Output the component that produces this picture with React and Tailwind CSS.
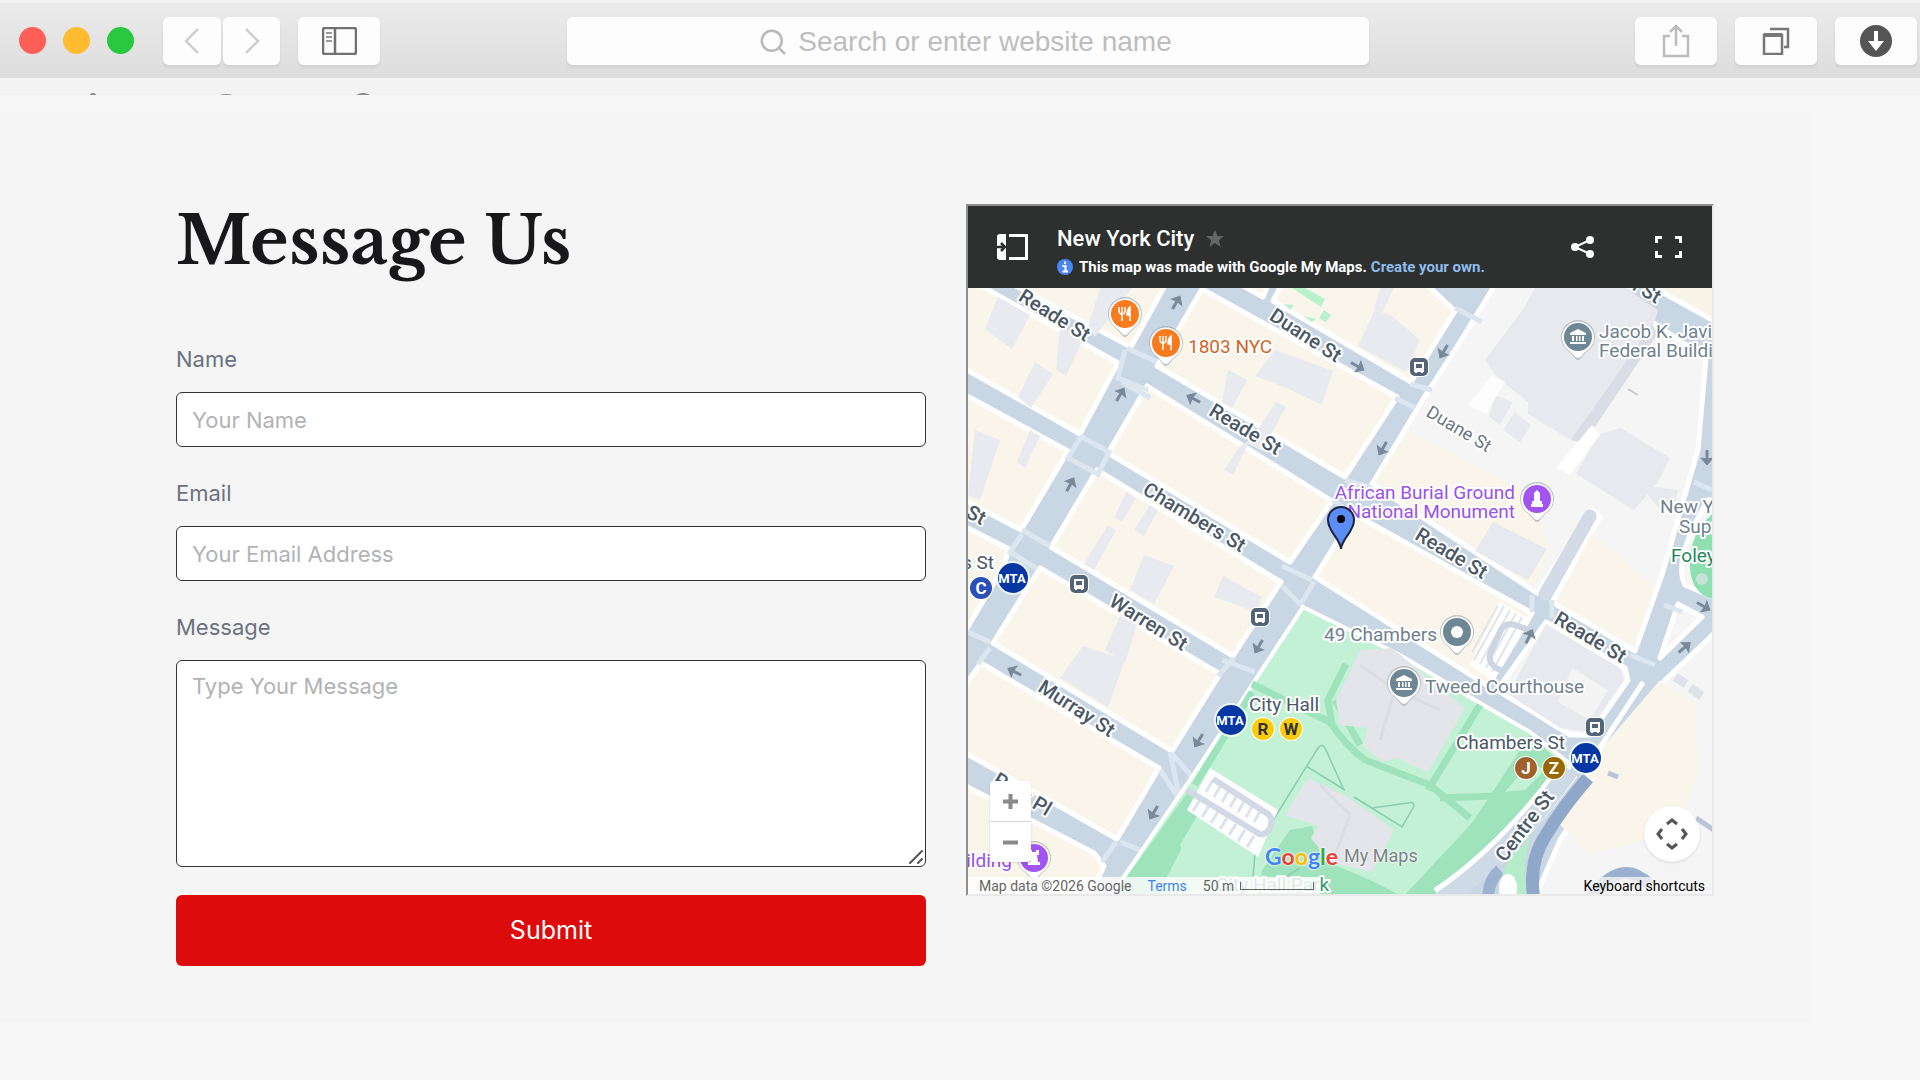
import { useState } from "react";
import { Search } from "lucide-react";

const streetLabels = [
  { text: "Reade St", x: 1051, y: 321, angle: 32 },
  { text: "Duane St", x: 1302, y: 341, angle: 33 },
  { text: "Reade St", x: 1242, y: 435, angle: 31 },
  { text: "Chambers St", x: 1191, y: 523, angle: 31 },
  { text: "Warren St", x: 1145, y: 628, angle: 32 },
  { text: "Murray St", x: 1073, y: 714, angle: 33 },
  { text: "Reade St", x: 1448, y: 559, angle: 31 },
  { text: "Reade St", x: 1587, y: 643, angle: 31 },
  { text: "Centre St", x: 1530, y: 830, angle: -53 },
  { text: "St", x: 973, y: 521, angle: 28 },
  { text: "h St", x: 1641, y: 295, angle: 31 },
  { text: "Park Pl", x: 1019, y: 800, angle: 31 },
];

const creamBlocks = [
  "1008,282 1131,347 1167,282",
  "960,284 978,284 1118,363 1080,434 960,366",
  "1202,289 1397,397 1345,477 1157,366",
  "1273,301 1284,280 1422,280 1455,311 1411,382",
  "1232,280 1263,297 1270,280",
  "1147,386 1332,501 1290,562 1108,453",
  "1097,470 1281,582 1233,656 1051,547",
  "1040,568 1220,674 1172,751 993,643",
  "981,663 1159,768 1117,839 960,750 960,692",
  "960,392 1068,451 1021,530 960,498",
  "960,524 1009,549 1003,568 960,640",
  "960,783 1094,853 1104,866 1088,900 960,900",
  "1354,514 1532,613 1488,686 1315,577",
];

const buildings = [
  "998,297 1030,315 1012,349 985,329",
  "1035,362 1053,374 1031,408 1018,397",
  "1060,325 1083,339 1066,376 1056,370",
  "1100,288 1132,288 1095,337 1088,327",
  "1275,350 1333,371 1322,405 1287,388 1255,376",
  "1228,370 1247,380 1232,408 1222,403",
  "1276,402 1286,407 1262,451 1248,444",
  "1240,446 1250,440 1233,475 1224,470",
  "975,430 1000,440 980,500 968,495",
  "1030,430 1040,436 1025,468 1017,462",
  "1126,492 1136,498 1122,522 1114,518",
  "1150,505 1158,510 1144,536 1134,530",
  "1108,525 1116,530 1094,570 1084,564",
  "1144,555 1174,566 1154,604 1130,590",
  "1223,576 1262,597 1256,612 1214,597",
  "1120,616 1137,625 1125,663 1105,650",
  "1083,646 1125,660 1108,707 1060,678",
  "1375,310 1392,316 1420,340 1406,372 1358,346",
  "1380,288 1394,288 1382,313 1374,309",
];

const greyBuildings = [
  "1524,308 1540,278 1610,278 1658,310 1652,330 1584,428 1571,440 1528,414 1528,402 1498,378 1485,360",
  "1495,395 1513,402 1500,425 1489,417",
  "1515,412 1531,425 1520,442 1503,430",
  "1598,435 1620,428 1670,458 1658,482 1634,510 1576,474",
  "1493,522 1547,549 1528,580 1475,551",
  "1546,624 1620,668 1624,680 1588,732 1560,728 1508,694",
  "1640,485 1678,490 1675,505 1660,510",
];

const arrows = [
  { x: 1176, y: 303, angle: -60 },
  { x: 1120, y: 395, angle: -60 },
  { x: 1194, y: 399, angle: 208 },
  { x: 1357, y: 366, angle: 30 },
  { x: 1444, y: 351, angle: 120 },
  { x: 1383, y: 448, angle: 120 },
  { x: 1070, y: 485, angle: -62 },
  { x: 1015, y: 672, angle: 208 },
  { x: 1259, y: 646, angle: 120 },
  { x: 1199, y: 740, angle: 122 },
  { x: 1154, y: 812, angle: 122 },
  { x: 1707, y: 457, angle: 90 },
  { x: 1529, y: 637, angle: -65 },
  { x: 1703, y: 606, angle: 30 },
  { x: 1684, y: 648, angle: -40 },
];

const busStops = [
  [1419, 367],
  [1079, 584],
  [1260, 617],
  [1595, 727],
];

const Arrow = ({ x, y, angle }) => (
  <g transform={`translate(${x} ${y}) rotate(${angle})`}>
    <path d="M-7 0H4" stroke="#7a899a" strokeWidth="3" fill="none" />
    <path d="M1 -6L8 0L1 6L2 0Z" fill="#7a899a" stroke="#7a899a" />
  </g>
);

const Pin = ({ x, y, color, children }) => (
  <g transform={`translate(${x} ${y})`}>
    <path
      d="M0 23C-3 23 -5 17 -11 13A17 17 0 1 1 11 13C5 17 3 23 0 23Z"
      fill="#9aa3ad"
      opacity="0.6"
    />
    <path
      d="M0 21C-3 21 -5 16 -11 12A16 16 0 1 1 11 12C5 16 3 21 0 21Z"
      fill="#fff"
    />
    <circle r="14" fill={color} />
    {children}
  </g>
);

const Fork = () => (
  <g stroke="#fff" strokeWidth="1.5" fill="none">
    <path d="M-6 -7V-3Q-6 0 -3 0Q0 0 0 -3V-7M-3 -7V7" />
    <path d="M5 7V-7Q2 -5 2 1H5" fill="#fff" />
  </g>
);

const Museum = () => (
  <g fill="#fff">
    <path d="M0 -8L8 -4V-2H-8V-4Z" />
    <path d="M-6 -1H-4V4H-6ZM-2 -1H-0.5V4H-2ZM1 -1H2.5V4H1ZM4 -1H6V4H4ZM-8 5H8V7H-8Z" />
  </g>
);

const BusStop = ({ x, y }) => (
  <g transform={`translate(${x} ${y})`}>
    <rect x="-10" y="-10" width="20" height="20" rx="6" fill="#fff" />
    <rect x="-9" y="-9" width="18" height="18" rx="5" fill="#526475" />
    <path
      d="M-5 -5H5V5H4V6H2V5H-2V6H-4V5H-5Z"
      fill="#fff"
    />
    <path d="M-3 -3H3V1H-3Z" fill="#526475" />
  </g>
);

const Mta = ({ x, y }) => (
  <g transform={`translate(${x} ${y})`}>
    <circle r="17" fill="#fff" opacity="0.7" />
    <circle r="15" fill="#0537a4" />
    <text
      x="-1"
      y="5"
      textAnchor="middle"
      fontSize="13"
      fontWeight="700"
      fill="#fff"
    >
      MTA
    </text>
  </g>
);

const Line = ({ x, y, color, ink, name }) => (
  <g transform={`translate(${x} ${y})`}>
    <circle r="12" fill="#fff" />
    <circle r="11" fill={color} />
    <text y="6" textAnchor="middle" fontSize="17" fontWeight="700" fill={ink}>
      {name}
    </text>
  </g>
);

const CityMap = () => (
  <svg
    viewBox="968 288 744 606"
    preserveAspectRatio="xMidYMid slice"
    className="block h-full w-full font-[Roboto,sans-serif]"
    role="img"
    aria-label="Map of New York City"
  >
    <rect x="960" y="280" width="760" height="620" fill="#c9d7e4" />

    {/* Civic centre ground */}
    <g fill="#f5f5f6" stroke="#fff" strokeWidth="5" strokeLinejoin="round">
      <path d="M1498 280L1458 345L1425 396L1372 484L1537 593L1592 510L1600 517L1552 602L1635 651L1662 575L1698 450L1706 358L1590 280Z" />
      <path d="M1640 280L1716 322V280Z" fill="#f9f4e8" />
      <path d="M1546 622L1625 668L1628 680L1590 735L1570 735L1497 690Z" />
      <path d="M1720 628L1665 680L1600 780L1560 840L1534 900H1720Z" />
      <path d="M1678 604L1702 617L1660 658Z" />
      <path d="M1708 500Q1672 560 1685 585L1720 600V500Z" />
    </g>

    {/* Blocks */}
    <g fill="#f9f5ea" stroke="#fff" strokeWidth="5" strokeLinejoin="round">
      {creamBlocks.map((points) => (
        <polygon key={points} points={points} />
      ))}
    </g>
    <g fill="#f9f5ea">
      <polygon points="1410,430 1530,495 1550,550 1533,587 1375,481" />
      <polygon points="1592,533 1655,587 1634,647 1556,602" />
      <polygon points="1660,680 1695,703 1698,775 1685,810 1652,838 1590,854 1555,820 1600,750" />
    </g>
    <g fill="#e9eaf0">
      {buildings.map((points) => (
        <polygon key={points} points={points} />
      ))}
    </g>
    <g fill="#e8e9ee">
      {greyBuildings.map((points) => (
        <polygon key={points} points={points} />
      ))}
    </g>
    <path d="M1652 325L1658 333L1584 443L1571 440Z" fill="#dadce6" />
    <path d="M1492 375L1505 382L1486 414L1468 405Z" fill="#fdfdfd" />
    <path d="M1592 425L1600 435L1570 475L1556 468Z" fill="#fff" />
    <path
      d="M1590 516L1545 594"
      stroke="#d3dbe6"
      strokeWidth="13"
      strokeLinecap="round"
    />
    <path d="M1572 668L1608 690L1590 720L1558 702Z" fill="#f4f4f5" />
    <g fill="#b9f1cd">
      <path d="M1292 288H1305L1325 299L1321 307Z" />
      <path d="M1284 304L1294 305L1290 310Z" />
      <path d="M1303 316L1316 319L1312 322Z" />
      <path d="M1324 310L1331 315L1326 322L1319 318Z" />
    </g>

    {/* Crosswalks */}
    <g stroke="#dce6f0" strokeWidth="5" fill="none">
      <path d="M1125 350L1118 378L1148 390M1157 362L1127 348M1122 382L1150 398" />
      <path d="M1080 438L1068 458L1098 474L1109 452L1080 436" />
      <path d="M1022 534L1010 552L1036 568M1050 546L1022 530" />
      <path d="M968 632L990 642M978 664L990 648" />
      <path d="M1282 566L1312 580M1282 586L1304 608M1314 582L1302 602" />
      <path d="M1222 660L1255 672M1218 676L1234 658" />
      <path d="M1172 754L1195 780M1160 770L1180 800L1170 752" />
      <path d="M1120 842L1140 850M1102 862L1116 842" />
      <path d="M1455 308L1482 322M1410 384L1432 390M1395 398L1415 408" />
      <path d="M1532 595V612M1552 600V618M1630 655L1655 665M1664 605L1682 612M1694 482L1712 490" />
      <path d="M1345 480L1372 488M1333 500L1350 512" />
    </g>

    {/* Parking beside 49 Chambers */}
    <path d="M1500 602L1531 620L1492 680L1470 665Z" fill="#fff" />
    <g stroke="#e1e4ea" strokeWidth="2">
      <path d="M1504 606L1474 660M1510 610L1480 664M1516 613L1486 668M1522 617L1492 672M1498 606L1472 652" />
    </g>
    <path
      d="M1534 632L1515 625Q1504 622 1500 632L1490 654Q1488 662 1496 668L1505 672"
      fill="none"
      stroke="#ccd6e2"
      strokeWidth="6"
    />

    {/* City Hall Park */}
    <path
      d="M1303 607L1400 655L1485 706L1530 732L1570 764L1562 790L1445 900H1108L1190 780Z"
      fill="#c3f1d5"
      stroke="#fff"
      strokeWidth="4"
    />
    <path
      d="M1188 792L1205 802L1180 845L1192 872L1150 900H1110Z"
      fill="#9fe3bd"
    />
    <path
      d="M1530 735L1566 768L1558 788L1440 900H1400L1472 823Z"
      fill="#9fe3bd"
    />
    <path d="M1185 842L1265 890H1160Z" fill="#c3f1d5" />
    <path
      d="M1290 830L1312 826L1322 860L1370 880L1410 900H1258L1262 870Z"
      fill="#9fe3bd"
    />
    <g stroke="#9fe3bd" strokeWidth="7" fill="none">
      <path d="M1252 684L1330 722Q1345 745 1365 760L1430 785L1470 818" />
      <path d="M1346 664L1328 700L1332 725" />
      <path d="M1480 705L1428 790M1440 798L1520 795" />
      <path d="M1252 692L1195 785M1360 745L1335 700" />
    </g>
    <path d="M1530 762L1545 770L1525 790L1505 792Z" fill="#c3f1d5" />
    <g fill="#e4e5ea">
      <path d="M1360 650L1392 648L1465 708L1428 772L1412 765L1398 758L1382 762L1363 745L1368 728L1340 725L1336 700Z" />
      <path d="M1308 778L1345 795L1394 830L1372 872L1330 862L1311 838L1318 826L1285 815Z" />
    </g>
    <path
      d="M1360 665L1395 690L1380 740M1320 785L1350 815L1335 855M1395 690L1440 710"
      stroke="#dcdde4"
      strokeWidth="3"
      fill="none"
    />
    <g fill="none" stroke="#8bcdb0" strokeWidth="1.5">
      <path d="M1272 822L1318 748Q1322 742 1326 750L1344 790M1306 766L1345 790" />
      <path d="M1354 797L1402 827L1414 806Q1414 801 1408 803L1372 808Z" />
      <path d="M1256 840L1252 890M1268 888L1300 868" />
    </g>
    <path d="M1210 768L1278 810L1258 857L1187 810Z" fill="#fdfdfe" />
    <g stroke="#dee2ea" strokeWidth="3">
      <path d="M1213 780L1206 792M1221 785L1214 797M1229 790L1222 802M1237 795L1230 807M1245 800L1238 812M1253 805L1246 817M1261 810L1254 822" />
      <path d="M1200 800L1193 811M1209 806L1202 817M1218 812L1211 823M1227 818L1220 829M1236 824L1229 835M1245 830L1238 841M1254 836L1247 847" />
    </g>
    <path
      d="M1213 779L1268 814Q1274 819 1270 828Q1264 838 1256 832L1187 790"
      stroke="#d2d8e4"
      strokeWidth="6"
      fill="none"
    />

    {/* Centre St and the bridge ramp */}
    <path d="M1568 770Q1510 850 1440 898" stroke="#fff" strokeWidth="23" fill="none" />
    <path d="M1570 770Q1512 852 1442 900" stroke="#cfdae7" strokeWidth="18" fill="none" />
    <path d="M1588 778Q1562 808 1546 835Q1528 862 1534 900" stroke="#8fa8ca" strokeWidth="13" fill="none" />
    <path d="M1500 870Q1488 880 1488 900M1590 900Q1620 855 1650 885" stroke="#9bb1d0" strokeWidth="12" fill="none" />
    <path d="M1523 846Q1500 862 1498 900H1528Q1520 870 1532 832Z" fill="#b5ecc9" />
    <ellipse cx="1508" cy="888" rx="9" ry="14" fill="#fff" />
    <path d="M1642 684L1597 752" stroke="#fff" strokeWidth="5" strokeLinecap="round" />
    <path d="M1675 677L1686 684M1690 688L1702 696" stroke="#dfe2e9" strokeWidth="9" />
    <path d="M1608 773L1618 777M1696 818L1714 830" stroke="#b9c5d7" strokeWidth="5" />

    {/* Foley Square */}
    <path d="M1720 508Q1688 530 1690 568Q1692 598 1720 600Z" fill="#8fe0b0" />
    <circle cx="1702" cy="579" r="6" fill="#c7e2d8" />

    <path d="M1628 389L1638 395" stroke="#c7cad2" strokeWidth="2" />

    {arrows.map((arrow) => (
      <Arrow key={`${arrow.x}-${arrow.y}`} {...arrow} />
    ))}
    {busStops.map(([x, y]) => (
      <BusStop key={`${x}-${y}`} x={x} y={y} />
    ))}

    <g
      stroke="#fff"
      strokeWidth="4"
      strokeLinejoin="round"
      paintOrder="stroke"
      fontSize="19"
    >
      <g fill="#4b5866" fontSize="20" fontWeight="500" textAnchor="middle">
        {streetLabels.map(({ text, x, y, angle }) => (
          <text
            key={`${x}-${y}`}
            transform={`translate(${x} ${y}) rotate(${angle})`}
          >
            {text}
          </text>
        ))}
      </g>
      <text
        transform="translate(1456 434) rotate(31)"
        textAnchor="middle"
        fill="#6c7885"
        fontSize="18"
      >
        Duane St
      </text>
      <g fill="#4b5866">
        <text x="1249" y="711">City Hall</text>
        <text x="1456" y="749">Chambers St</text>
        <text x="994" y="569" textAnchor="end">s St</text>
      </g>
      <g fill="#71818e">
        <text x="1599" y="338">Jacob K. Javits</text>
        <text x="1599" y="357">Federal Building</text>
        <text x="1437" y="641" textAnchor="end">49 Chambers</text>
        <text x="1425" y="693">Tweed Courthouse</text>
        <text x="1660" y="513">New York</text>
        <text x="1679" y="533">Supreme</text>
      </g>
      <text x="1671" y="562" fill="#23885a">Foley</text>
      <text x="1188" y="353" fill="#d1662a">1803 NYC</text>
      <g fill="#9a50ea">
        <text x="1515" y="499" textAnchor="end">African Burial Ground</text>
        <text x="1515" y="518" textAnchor="end">National Monument</text>
        <text x="1012" y="867" textAnchor="end">Building</text>
      </g>
      <text x="1216" y="891" fill="#3a9870">City Hall Park</text>
    </g>

    <Pin x={1125} y={314} color="#f87c1f">
      <Fork />
    </Pin>
    <Pin x={1166} y={343} color="#f87c1f">
      <Fork />
    </Pin>
    <Pin x={1578} y={337} color="#6e8794">
      <Museum />
    </Pin>
    <Pin x={1404} y={683} color="#6e8794">
      <Museum />
    </Pin>
    <Pin x={1457} y={632} color="#6e8794">
      <circle r="6" fill="#fff" />
    </Pin>
    <Pin x={1537} y={499} color="#a254f2">
      <path d="M0 -9L3 -6V2H5V5H6V8H-6V5H-5V2H-3V-6Z" fill="#fff" />
    </Pin>
    <Pin x={1034} y={858} color="#a254f2">
      <path
        d="M-5 -8H-2V-6H2V-8H5V-3H3L4 4H6V7H-6V4H-4L-3 -3H-5Z"
        fill="#fff"
      />
    </Pin>

    <Mta x={1013} y={578} />
    <Mta x={1231} y={720} />
    <Mta x={1586} y={758} />
    <Line x={981} y={588} color="#2b4fb8" ink="#fff" name="C" />
    <Line x={1263} y={729} color="#fccc0a" ink="#333" name="R" />
    <Line x={1291} y={729} color="#fccc0a" ink="#333" name="W" />
    <Line x={1526} y={768} color="#a0622d" ink="#fff" name="J" />
    <Line x={1554} y={768} color="#996600" ink="#fff" name="Z" />

    {/* Location marker */}
    <path
      d="M1341 549C1340 538 1328 532 1328 520A13 13 0 0 1 1354 520C1354 532 1342 538 1341 549Z"
      fill="#5c8df6"
      stroke="#1c2340"
      strokeWidth="2"
    />
    <circle cx="1341" cy="519" r="4" fill="#000" />
  </svg>
);

const MapPanel = () => {
  return (
    <div className="flex h-[692px] flex-col border-2 border-t-[#8f8f8f] border-r-[#e9e9e9] border-b-[#e9e9e9] border-l-[#8f8f8f] font-[Roboto,sans-serif]">
      <header className="flex h-[82px] shrink-0 items-center bg-[#2e3030] pr-[30px] pl-[29px] text-white">
        <button aria-label="Show legend" className="mr-7">
          <svg width="32" height="26" viewBox="0 0 32 26" fill="none">
            <path d="M3 0H9V26H3Q0 26 0 23V3Q0 0 3 0Z" fill="#fff" />
            <path d="M12 1.5H29.5V24.5H12" stroke="#fff" strokeWidth="3" />
            <path d="M0 13H6M4 9L8 13L4 17" stroke="#2e3030" strokeWidth="2.5" />
          </svg>
        </button>
        <div className="min-w-0 flex-1 pt-3">
          <div className="flex items-center gap-3">
            <h2 className="text-[22px] leading-7 font-medium">New York City</h2>
            <button aria-label="Star this map">
              <svg width="18" height="18" viewBox="0 0 18 18">
                <path
                  d="M9 0L11.500 6H18L12.800 10.300L14.700 17L9 13L3.300 17L5.200 10.300L0 6H6.500Z"
                  fill="#656767"
                />
              </svg>
            </button>
          </div>
          <p className="flex items-center text-[15px] leading-7 font-bold whitespace-nowrap">
            <svg width="16" height="16" viewBox="0 0 16 16" className="mr-1.5">
              <circle cx="8" cy="8" r="8" fill="#4a87f5" />
              <path
                d="M8 2.500V5M5.500 7H8.500V12.500M5.500 12.500H11"
                stroke="#fff"
                strokeWidth="2"
                fill="none"
              />
            </svg>
            This map was made with Google My Maps.
            <a href="#create" className="ml-1 text-[#8ebdec]">
              Create your own.
            </a>
          </p>
        </div>
        <button aria-label="Share">
          <svg width="23" height="22" viewBox="0 0 23 22" fill="#fff">
            <path d="M19 4L4 11L19 18" stroke="#fff" strokeWidth="2" fill="none" />
            <circle cx="19" cy="4" r="4" />
            <circle cx="4" cy="11" r="4" />
            <circle cx="19" cy="18" r="4" />
          </svg>
        </button>
        <button aria-label="Full screen" className="ml-[61px]">
          <svg
            width="27"
            height="22"
            viewBox="0 0 27 22"
            fill="none"
            stroke="#fff"
            strokeWidth="3"
          >
            <path d="M1.500 7V1.500H7M20 1.500H25.500V7M25.500 15V20.500H20M7 20.500H1.500V15" />
          </svg>
        </button>
      </header>

      <div className="relative min-h-0 flex-1 overflow-hidden">
        <CityMap />

        <div className="absolute bottom-8 left-[22px] flex w-[41px] flex-col divide-y divide-[#d5d5d5] rounded-sm bg-white shadow">
          <button
            aria-label="Zoom in"
            className="flex h-[41px] items-center justify-center"
          >
            <svg width="15" height="15" viewBox="0 0 15 15" stroke="#8a8a8a" strokeWidth="4">
              <path d="M0 7.500H15M7.500 0V15" />
            </svg>
          </button>
          <button
            aria-label="Zoom out"
            className="flex h-10 items-center justify-center"
          >
            <svg width="15" height="15" viewBox="0 0 15 15" stroke="#8a8a8a" strokeWidth="4">
              <path d="M0 7.500H15" />
            </svg>
          </button>
        </div>

        <button
          aria-label="Map camera controls"
          className="absolute right-3 bottom-8 flex size-14 items-center justify-center rounded-full bg-white shadow"
        >
          <svg
            width="32"
            height="32"
            viewBox="0 0 32 32"
            fill="none"
            stroke="#555"
            strokeWidth="3"
          >
            <path d="M11 6L16 2L21 6M11 26L16 30L21 26M6 11L2 16L6 21M26 11L30 16L26 21" />
          </svg>
        </button>

        <div
          className="absolute bottom-[22px] left-[297px] flex items-center gap-1.5 text-[18px] leading-8 text-[#7c8287]"
          aria-label="Google My Maps"
        >
          <span className="font-[Lato,sans-serif] text-[23px] font-bold [text-shadow:0_0_3px_white,0_0_2px_white]">
            <span className="text-[#4285f4]">G</span>
            <span className="text-[#ea4335]">o</span>
            <span className="text-[#fbbc05]">o</span>
            <span className="text-[#4285f4]">g</span>
            <span className="text-[#34a853]">l</span>
            <span className="text-[#ea4335]">e</span>
          </span>
          <span className="[text-shadow:0_0_3px_white,0_0_2px_white]">
            My Maps
          </span>
        </div>

        <footer className="absolute inset-x-0 bottom-0 flex h-[17px] items-center text-[14px] leading-4 text-[#666]">
          <div className="flex h-full items-center bg-white/80 pr-1.5 pl-[11px]">
            <span>Map data ©2026 Google</span>
            <a href="#terms" className="ml-4 text-[#3f83ee]">
              Terms
            </a>
            <span className="ml-4">50 m</span>
            <span className="ml-1.5 h-2 w-[74px] border-x border-b border-[#666]" />
          </div>
          <button className="ml-auto h-full bg-[#f5f5f5]/80 pr-[7px] pl-1 text-black">
            Keyboard shortcuts
          </button>
        </footer>
      </div>
    </div>
  );
};

const ToolButton = ({ label, className, children }) => (
  <button
    aria-label={label}
    className={`flex h-12 items-center justify-center rounded-md bg-[#fdfdfd] shadow-[0_3px_3px_rgba(0,0,0,0.06)] ${className}`}
  >
    {children}
  </button>
);

const BrowserBar = () => {
  const [address, setAddress] = useState("");

  return (
    <div className="bg-[#f3f3f3] pt-[3px]">
      <div className="grid h-[75px] grid-cols-[567fr_802fr_551fr] items-center bg-linear-to-b from-[#ebebeb] to-[#dddddd]">
        <div className="flex items-center pl-[19px]">
          <div className="mr-[29px] flex gap-[17px]">
            <button
              aria-label="Close"
              className="size-[27px] rounded-full bg-[#ff5f57]"
            />
            <button
              aria-label="Minimize"
              className="size-[27px] rounded-full bg-[#febc2e]"
            />
            <button
              aria-label="Zoom"
              className="size-[27px] rounded-full bg-[#28c840]"
            />
          </div>
          <div className="mr-[18px] flex gap-0.5">
            <ToolButton label="Back" className="w-[58px]">
              <svg width="16" height="26" viewBox="0 0 16 26" fill="none" stroke="#cfcfcf" strokeWidth="2.5">
                <path d="M14 1L2 13L14 25" />
              </svg>
            </ToolButton>
            <ToolButton label="Forward" className="w-[57px]">
              <svg width="16" height="26" viewBox="0 0 16 26" fill="none" stroke="#cfcfcf" strokeWidth="2.5">
                <path d="M2 1L14 13L2 25" />
              </svg>
            </ToolButton>
          </div>
          <ToolButton label="Sidebar" className="w-[82px]">
            <svg width="35" height="28" viewBox="0 0 35 28" fill="none" stroke="#717171">
              <rect x="1" y="1" width="33" height="26" rx="2" strokeWidth="2.5" />
              <path d="M13 1V27" strokeWidth="2.5" />
              <path d="M4 6H10M4 10H10M4 14H10" stroke="#999" strokeWidth="2" />
            </svg>
          </ToolButton>
        </div>

        <label className="flex h-12 items-center justify-center gap-2.5 rounded-md bg-[#fdfdfd] pt-[3px] pr-1.5 text-[#b9b9b9] shadow-[0_3px_3px_rgba(0,0,0,0.06)]">
          <Search className="size-[30px]" strokeWidth={2} />
          <input
            type="text"
            aria-label="Address"
            value={address}
            onChange={(e) => setAddress(e.target.value)}
            placeholder="Search or enter website name"
            className="field-sizing-content font-['Liberation_Sans',sans-serif] text-[28px] leading-8 text-gray-700 outline-none placeholder:text-[#bdbdbd]"
          />
        </label>

        <div className="flex justify-end gap-[18px] pr-[3px]">
          <ToolButton label="Share page" className="w-[82px]">
            <svg width="28" height="34" viewBox="0 0 28 34" fill="none" stroke="#bcbcbc" strokeWidth="2.5">
              <path d="M8 12H2V32H26V12H20M14 22V2M8 8L14 2L20 8" />
            </svg>
          </ToolButton>
          <ToolButton label="Show tabs" className="w-[82px]">
            <svg width="28" height="28" viewBox="0 0 28 28" fill="none" stroke="#777" strokeWidth="2.5">
              <rect x="2" y="8" width="18" height="19" />
              <path d="M8 2H26V20H22" />
              <path d="M2 8H20" strokeWidth="4" />
            </svg>
          </ToolButton>
          <ToolButton label="Downloads" className="w-[82px]">
            <svg width="32" height="32" viewBox="0 0 32 32">
              <circle cx="16" cy="16" r="16" fill="#555" />
              <path d="M14 6H18V16H24L16 26L8 16H14Z" fill="#fff" />
            </svg>
          </ToolButton>
        </div>
      </div>
      {/* Bookmarks peeking out below the toolbar */}
      <svg className="block h-[17px] w-full" fill="#8b8b8b">
        <ellipse cx="93" cy="17" rx="3" ry="2" />
        <ellipse cx="226" cy="18" rx="7" ry="2" />
        <ellipse cx="363" cy="18" rx="7" ry="3" />
      </svg>
    </div>
  );
};

const fieldClass =
  "block w-full rounded-md border border-[#333] bg-white px-[15px] text-[22px] leading-[30px] text-gray-900 outline-none placeholder:text-[#b1b3b5]";

const labelClass = "mb-[18px] block text-[22px] leading-[30px] text-[#6b7280]";

const ContactForm = () => {
  const [form, setForm] = useState({ name: "", email: "", message: "" });

  const handleChange = (e) => {
    setForm({ ...form, [e.target.name]: e.target.value });
  };

  const handleSubmit = (e) => {
    e.preventDefault();
    setForm({ name: "", email: "", message: "" });
  };

  return (
    <form onSubmit={handleSubmit}>
      <h1 className="mb-[66px] font-['Libre_Baskerville','Liberation_Serif',serif] text-[66px] leading-[74px] font-bold text-[#18181a]">
        Message Us
      </h1>
      <div className="mb-[31px]">
        <label htmlFor="name" className={labelClass}>
          Name
        </label>
        <input
          id="name"
          name="name"
          type="text"
          placeholder="Your Name"
          value={form.name}
          onChange={handleChange}
          className={`h-[55px] ${fieldClass}`}
        />
      </div>
      <div className="mb-[31px]">
        <label htmlFor="email" className={labelClass}>
          Email
        </label>
        <input
          id="email"
          name="email"
          type="email"
          placeholder="Your Email Address"
          value={form.email}
          onChange={handleChange}
          className={`h-[55px] ${fieldClass}`}
        />
      </div>
      <div className="mb-7">
        <label htmlFor="message" className={labelClass}>
          Message
        </label>
        <div className="relative">
          <textarea
            id="message"
            name="message"
            placeholder="Type Your Message"
            value={form.message}
            onChange={handleChange}
            className={`h-[207px] py-2.5 [&::-webkit-resizer]:bg-transparent ${fieldClass}`}
          />
          <svg
            width="14"
            height="14"
            viewBox="0 0 14 14"
            stroke="#555"
            strokeWidth="2"
            strokeLinecap="round"
            className="pointer-events-none absolute right-[3px] bottom-[3px]"
          >
            <path d="M1 13L13 1M9 13L13 9" />
          </svg>
        </div>
      </div>
      <button
        type="submit"
        className="h-[71px] w-full rounded-md bg-[#dd0b0b] text-[25px] text-white"
      >
        Submit
      </button>
    </form>
  );
};

const App = () => {
  return (
    <div className="min-h-screen bg-[#f7f7f7] font-[Inter,sans-serif]">
      <BrowserBar />
      <main className="mt-[17px] mr-[108px] grid grid-cols-[750fr_748fr] items-start gap-10 bg-[#f5f5f5] pt-[92px] pr-[98px] pb-14 pl-44">
        <ContactForm />
        <MapPanel />
      </main>
    </div>
  );
};

export default App;
